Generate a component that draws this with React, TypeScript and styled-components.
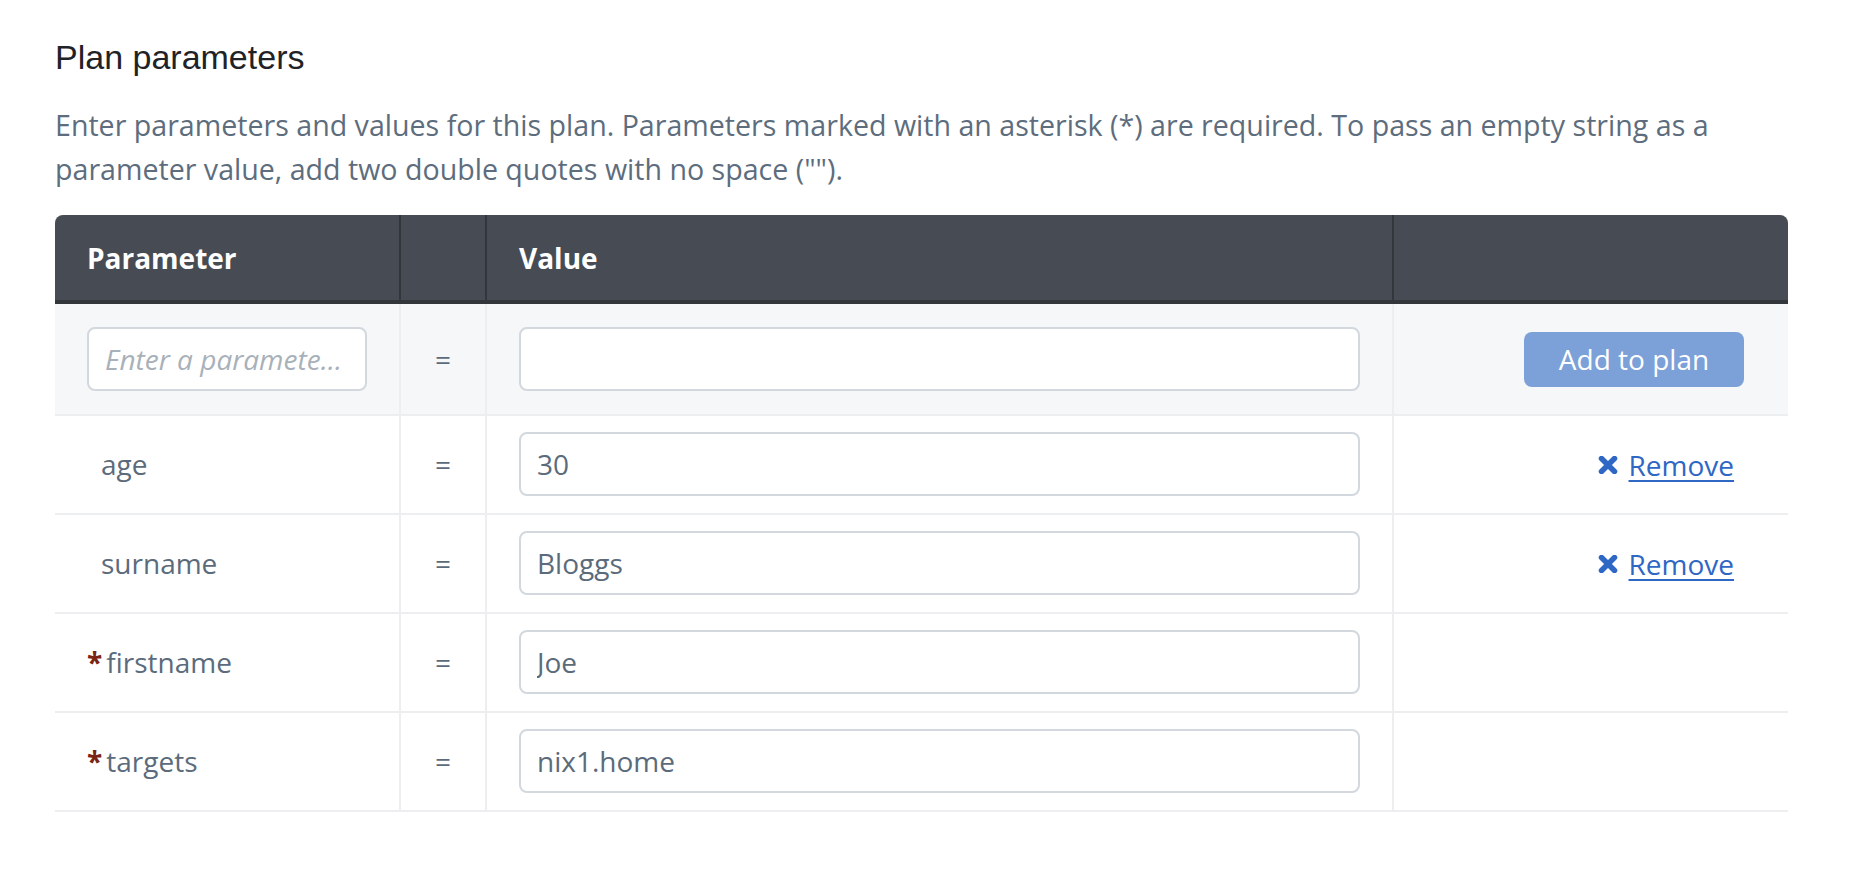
import React, { useState } from 'react'
import styled, { createGlobalStyle } from 'styled-components'

const GlobalStyle = createGlobalStyle`
    html, body {
        margin:0;
        padding:0;
        background:#fff;
    }
    body {
        font-family:"Open Sans", "Liberation Sans", sans-serif;
        color:#5b6b7b;
    }
`

const Page = styled.div`
    padding:35px 62px 40px 55px;
`

const Title = styled.h2`
    margin:0;
    font-family:"Liberation Sans", Arial, sans-serif;
    font-weight:normal;
    font-size:34px;
    line-height:44px;
    color:#1f2226;
`

const Intro = styled.p`
    margin:24px 0 24px;
    font-size:28.6px;
    line-height:44px;
    color:#5d6d7d;
`

const Table = styled.table`
    width:100%;
    table-layout:fixed;
    border-collapse:separate;
    border-spacing:0;
    font-size:28px;
`

const HeadCell = styled.th<{first?:boolean; last?:boolean}>`
    height:85px;
    padding:0 32px;
    background:#474c54;
    color:#fff;
    font-weight:bold;
    text-align:left;
    border-bottom:4px solid #33373c;
    border-left:${p=>p.first?'none':'2px solid #33373c'};
    border-top-left-radius:${p=>p.first?'8px':'0'};
    border-top-right-radius:${p=>p.last?'8px':'0'};
`

const Row = styled.tr<{fresh?:boolean}>`
    background:${p=>p.fresh?'#f5f7f8':'#fff'};
`

const Cell = styled.td<{first?:boolean; align?:string; tall?:boolean}>`
    padding:${p=>p.tall?'23px':'16px'} 32px ${p=>p.tall?'23px':'17px'};
    border-bottom:2px solid #eceef0;
    border-left:${p=>p.first?'none':'2px solid #eceef0'};
    text-align:${p=>p.align||'left'};
    vertical-align:middle;
    white-space:nowrap;
`

const EqCell = styled(Cell)`
    padding-left:0;
    padding-right:0;
    text-align:center;
    color:#5b6b7b;
`

const TextInput = styled.input`
    box-sizing:border-box;
    width:100%;
    height:64px;
    padding:0 16px;
    border:2px solid #d2d8dd;
    border-radius:8px;
    background:#fff;
    font-family:"Open Sans", sans-serif;
    font-size:28px;
    color:#5b6b7b;
    text-overflow:ellipsis;
    outline:none;
    &::placeholder {
        color:#a8b1b9;
        font-style:italic;
    }
`

const Name = styled.span<{required?:boolean}>`
    display:inline-flex;
    align-items:baseline;
    padding-left:${p=>p.required?'0':'14px'};
    color:#5b6b7b;
`

const Star = styled.span`
    color:#7a2414;
    font-weight:bold;
    margin-right:4px;
`

const AddButton = styled.button`
    width:220px;
    height:55px;
    margin-right:12px;
    border:none;
    border-radius:8px;
    background:#7ca0d8;
    color:#fff;
    font-family:"Open Sans", sans-serif;
    font-size:28px;
    cursor:default;
`

const RemoveLink = styled.a`
    display:inline-flex;
    align-items:center;
    gap:11px;
    margin-right:22px;
    color:#2f67c4;
    font-size:28px;
    cursor:pointer;
    span {
        text-decoration:underline;
        text-underline-offset:4px;
        text-decoration-thickness:2px;
    }
`

interface Param {
    name:string;
    value:string;
    required:boolean;
}

const CloseIcon = () => (
    <svg width="20" height="18" viewBox="0 0 20 18">
        <path d="M3.5 2.5 L16.5 15.5 M16.5 2.5 L3.5 15.5" stroke="#2f67c4" strokeWidth="5.5" strokeLinecap="round"/>
    </svg>
)

const App:React.FC = () => {
    const [params] = useState<Param[]>([
        {name:'age', value:'30', required:false},
        {name:'surname', value:'Bloggs', required:false},
        {name:'firstname', value:'Joe', required:true},
        {name:'targets', value:'nix1.home', required:true},
    ])

    return (
        <Page>
            <GlobalStyle/>
            <Title>Plan parameters</Title>
            <Intro>
                Enter parameters and values for this plan. Parameters marked with an asterisk (*) are required. To pass an empty string as a parameter value, add two double quotes with no space ("").
            </Intro>
            <Table>
                <colgroup>
                    <col style={{width:344}}/>
                    <col style={{width:86}}/>
                    <col/>
                    <col style={{width:396}}/>
                </colgroup>
                <thead>
                    <tr>
                        <HeadCell first>Parameter</HeadCell>
                        <HeadCell/>
                        <HeadCell>Value</HeadCell>
                        <HeadCell last/>
                    </tr>
                </thead>
                <tbody>
                    <Row fresh>
                        <Cell first tall><TextInput placeholder="Enter a parameter name"/></Cell>
                        <EqCell tall>=</EqCell>
                        <Cell tall><TextInput/></Cell>
                        <Cell tall align="right"><AddButton>Add to plan</AddButton></Cell>
                    </Row>
                    {params.map(p=>(
                        <Row key={p.name}>
                            <Cell first>
                                <Name required={p.required}>
                                    {p.required && <Star>*</Star>}
                                    {p.name}
                                </Name>
                            </Cell>
                            <EqCell>=</EqCell>
                            <Cell><TextInput defaultValue={p.value}/></Cell>
                            <Cell align="right">
                                {!p.required && (
                                    <RemoveLink><CloseIcon/><span>Remove</span></RemoveLink>
                                )}
                            </Cell>
                        </Row>
                    ))}
                </tbody>
            </Table>
        </Page>
    )
}

export default App
